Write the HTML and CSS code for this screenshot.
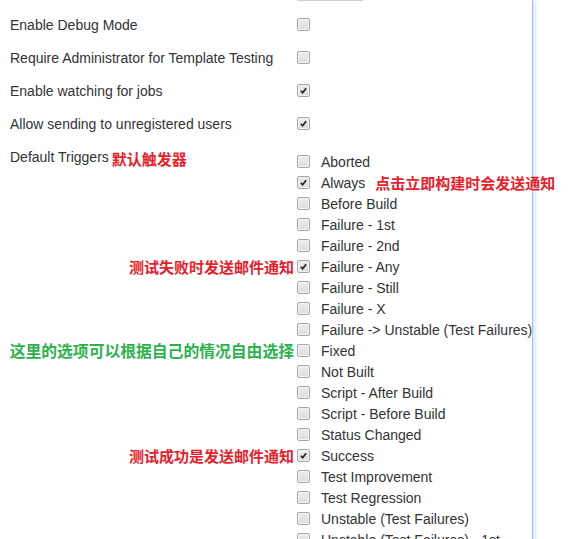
FILE: index.html
```html
<!DOCTYPE html>
<html>
<head>
<meta charset="utf-8">
<link rel="stylesheet" href="styles.css">
</head>
<body>
<div class="panel">
  <div class="topfield"></div>
  <div class="opt"><span class="label">Enable Debug Mode</span><span class="cb"></span></div>
  <div class="opt"><span class="label">Require Administrator for Template Testing</span><span class="cb"></span></div>
  <div class="opt"><span class="label">Enable watching for jobs</span><span class="cb checked"><svg viewBox="0 0 13 13"><path d="M3.4 6.8 L5.5 9.1 L9.6 3.8" /></svg></span></div>
  <div class="opt"><span class="label">Allow sending to unregistered users</span><span class="cb checked"><svg viewBox="0 0 13 13"><path d="M3.4 6.8 L5.5 9.1 L9.6 3.8" /></svg></span></div>

  <div class="triggers">
    <div class="left first"><span class="label">Default Triggers</span> <span class="note red">默认触发器</span></div>
    <div class="item"><span class="cb"></span><span class="tl">Aborted</span></div>

    <div class="left"></div>
    <div class="item"><span class="cb checked"><svg viewBox="0 0 13 13"><path d="M3.4 6.8 L5.5 9.1 L9.6 3.8" /></svg></span><span class="tl">Always</span><span class="note red inline">点击立即构建时会发送通知</span></div>

    <div class="left"></div>
    <div class="item"><span class="cb"></span><span class="tl">Before Build</span></div>

    <div class="left"></div>
    <div class="item"><span class="cb"></span><span class="tl">Failure - 1st</span></div>

    <div class="left"></div>
    <div class="item"><span class="cb"></span><span class="tl">Failure - 2nd</span></div>

    <div class="left right"><span class="note red">测试失败时发送邮件通知</span></div>
    <div class="item"><span class="cb checked"><svg viewBox="0 0 13 13"><path d="M3.4 6.8 L5.5 9.1 L9.6 3.8" /></svg></span><span class="tl">Failure - Any</span></div>

    <div class="left"></div>
    <div class="item"><span class="cb"></span><span class="tl">Failure - Still</span></div>

    <div class="left"></div>
    <div class="item"><span class="cb"></span><span class="tl">Failure - X</span></div>

    <div class="left"></div>
    <div class="item"><span class="cb"></span><span class="tl">Failure -&gt; Unstable (Test Failures)</span></div>

    <div class="left right"><span class="note green">这里的选项可以根据自己的情况自由选择</span></div>
    <div class="item"><span class="cb"></span><span class="tl">Fixed</span></div>

    <div class="left"></div>
    <div class="item"><span class="cb"></span><span class="tl">Not Built</span></div>

    <div class="left"></div>
    <div class="item"><span class="cb"></span><span class="tl">Script - After Build</span></div>

    <div class="left"></div>
    <div class="item"><span class="cb"></span><span class="tl">Script - Before Build</span></div>

    <div class="left"></div>
    <div class="item"><span class="cb"></span><span class="tl">Status Changed</span></div>

    <div class="left right"><span class="note red">测试成功是发送邮件通知</span></div>
    <div class="item"><span class="cb checked"><svg viewBox="0 0 13 13"><path d="M3.4 6.8 L5.5 9.1 L9.6 3.8" /></svg></span><span class="tl">Success</span></div>

    <div class="left"></div>
    <div class="item"><span class="cb"></span><span class="tl">Test Improvement</span></div>

    <div class="left"></div>
    <div class="item"><span class="cb"></span><span class="tl">Test Regression</span></div>

    <div class="left"></div>
    <div class="item"><span class="cb"></span><span class="tl">Unstable (Test Failures)</span></div>

    <div class="left"></div>
    <div class="item"><span class="cb"></span><span class="tl">Unstable (Test Failures) - 1st</span></div>
  </div>
</div>
</body>
</html>
```

FILE: styles.css
```css
html, body {
  margin: 0;
  padding: 0;
  background: #ffffff;
  overflow: hidden;
}

body {
  font-family: "Liberation Sans", Arial, sans-serif;
  font-size: 14px;
  color: #333333;
}

.panel {
  width: 532px;
  min-height: 600px;
  border-right: 1px solid #9fc3f3;
  box-shadow: 2px 0 5px rgba(150, 190, 245, 0.45);
  background: #ffffff;
}

.topfield {
  margin-left: 297px;
  width: 66px;
  height: 0;
  border-bottom: 1px solid #cfcfcf;
}

.opt {
  display: grid;
  grid-template-columns: 297px auto;
  align-items: center;
  height: 33px;
}

.topfield + .opt {
  margin-top: 7px;
}

.label {
  padding-left: 10px;
  white-space: nowrap;
}

.cb {
  box-sizing: border-box;
  width: 13px;
  height: 13px;
  border: 1px solid #a6a6a6;
  border-radius: 2px;
  background: linear-gradient(#ececec, #dcdcdc);
  box-shadow: inset 0 0 0 1px #f4f4f4;
  display: flex;
  align-items: center;
  justify-content: center;
  flex: none;
}

.cb svg {
  width: 11px;
  height: 11px;
}

.cb svg path {
  fill: none;
  stroke: #222222;
  stroke-width: 2;
}

.triggers {
  display: grid;
  grid-template-columns: 297px auto;
  grid-auto-rows: 21px;
  margin-top: 11px;
}

.left {
  display: flex;
  align-items: center;
  white-space: nowrap;
}

.left.first {
  align-items: flex-start;
  margin-top: -2px;
}

.left.first .note {
  margin-left: 3px;
}

.left.right {
  justify-content: flex-end;
  padding-right: 3px;
}

.item {
  display: flex;
  align-items: center;
  white-space: nowrap;
}

.tl {
  margin-left: 11px;
}

.note {
  font-family: "Noto Sans CJK SC", sans-serif;
  font-weight: 700;
  font-size: 15px;
  line-height: 20px;
}

.note.inline {
  margin-left: 10px;
}

.red {
  color: #e8202a;
}

.green {
  color: #2bb24c;
  font-size: 15.8px;
}
```
